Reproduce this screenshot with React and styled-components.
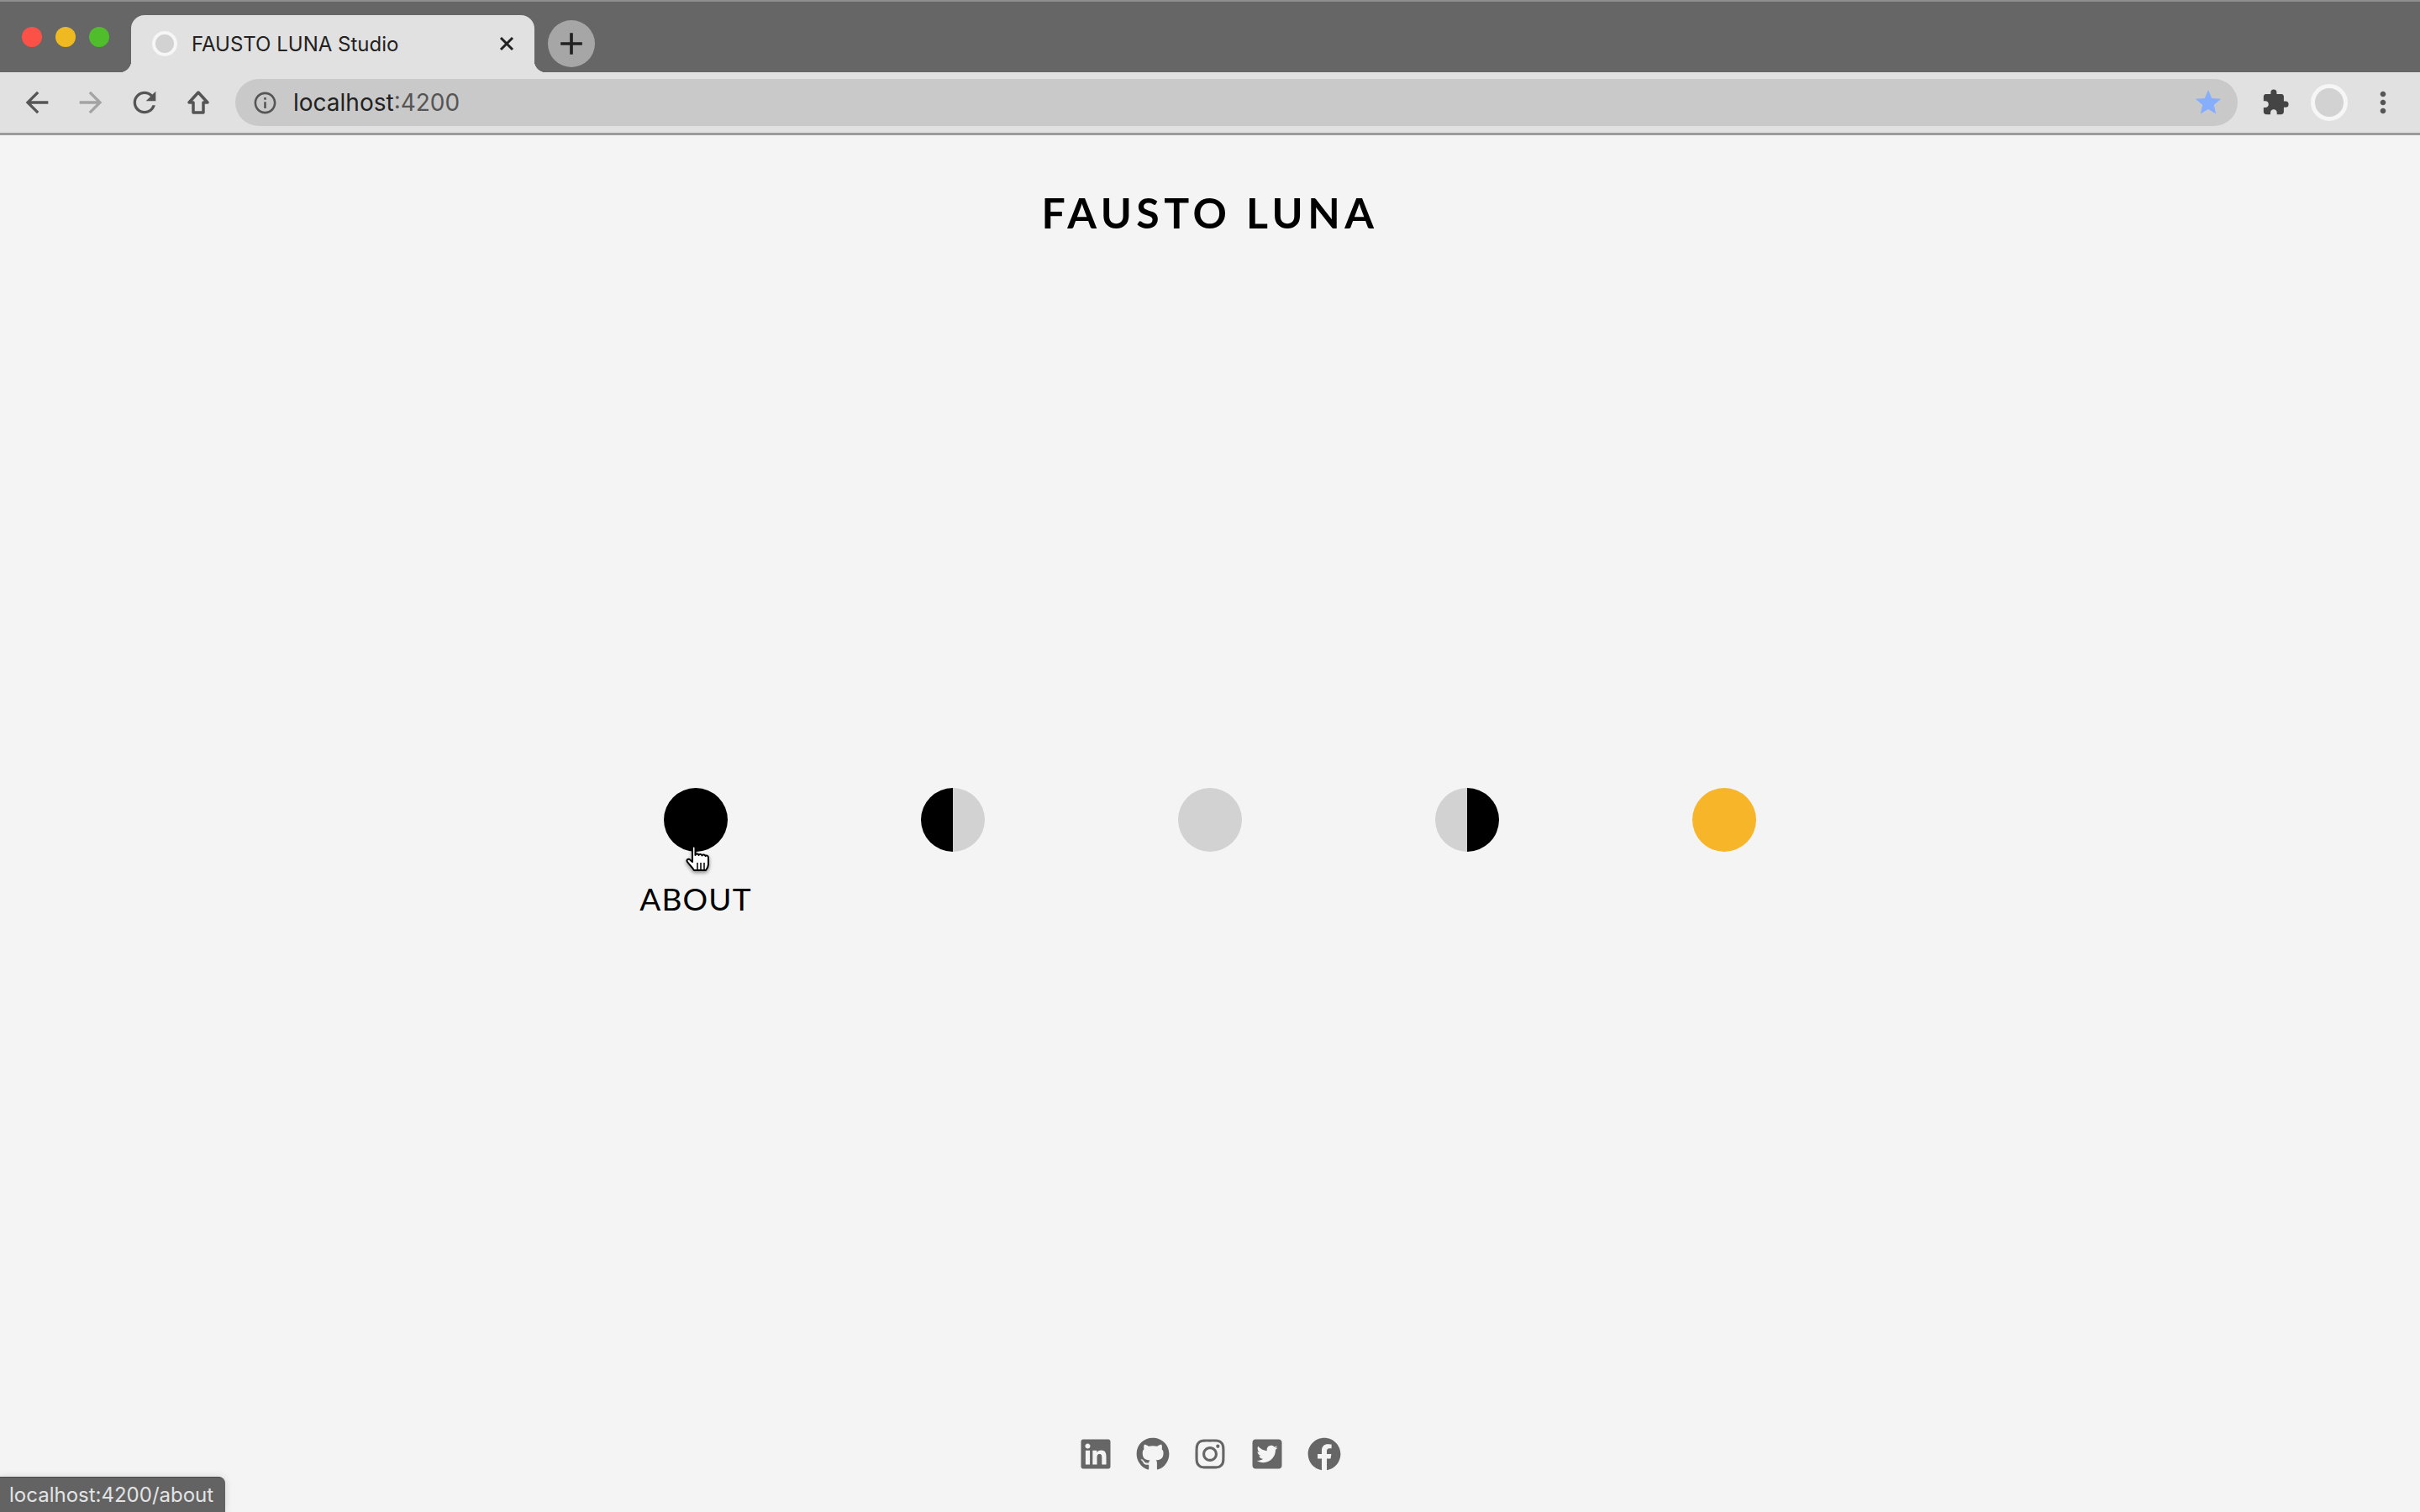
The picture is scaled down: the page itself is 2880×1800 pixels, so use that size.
import React from 'react';
import styled, { createGlobalStyle } from 'styled-components';
import {
  MdArrowBack,
  MdArrowForward,
  MdRefresh,
  MdInfoOutline,
  MdStar,
  MdExtension,
  MdMoreVert,
  MdAdd,
} from 'react-icons/md';
import {
  FaLinkedin,
  FaGithub,
  FaInstagram,
  FaTwitterSquare,
  FaFacebook,
} from 'react-icons/fa';

const GlobalStyle = createGlobalStyle`
  html, body {
    margin: 0;
    padding: 0;
    background: #666;
  }
  #root {
    width: 2880px;
    height: 1800px;
  }
`;

const Window = styled.div`
  position: relative;
  width: 2880px;
  height: 1800px;
  display: flex;
  flex-direction: column;
  overflow: hidden;
  background: #f4f4f4;
  font-family: Inter, Roboto, "Liberation Sans", sans-serif;
`;

const TabStrip = styled.div`
  height: 84px;
  flex: none;
  display: flex;
  align-items: flex-end;
  background: #666;
  border-top: 2px solid #8f8f8f;
  padding-left: 26px;
`;

const Lights = styled.div`
  display: flex;
  gap: 16px;
  align-self: flex-start;
  margin-top: 30px;
  margin-right: 26px;
`;

const Light = styled.span`
  width: 24px;
  height: 24px;
  border-radius: 50%;
  background: ${p => p.$color};
`;

const Tab = styled.div`
  position: relative;
  width: 480px;
  height: 68px;
  box-sizing: border-box;
  padding: 0 23px 0 25px;
  display: flex;
  align-items: center;
  background: #e1e1e1;
  border-radius: 16px 16px 0 0;
  color: #222;
  font-size: 24px;

  &::before,
  &::after {
    content: "";
    position: absolute;
    bottom: 0;
    width: 14px;
    height: 14px;
  }
  &::before {
    left: -14px;
    background: radial-gradient(circle at 0 0, transparent 14px, #e1e1e1 14.5px);
  }
  &::after {
    right: -14px;
    background: radial-gradient(circle at 100% 0, transparent 14px, #e1e1e1 14.5px);
  }
`;

const Favicon = styled.span`
  width: 22px;
  height: 22px;
  flex: none;
  border-radius: 50%;
  background: #d2d2d2;
  border: 4px solid #f6f6f6;
  margin-right: 17px;
`;

const TabTitle = styled.span`
  flex: 1;
  white-space: nowrap;
`;

const NewTab = styled.div`
  width: 56px;
  height: 56px;
  margin: 0 0 6px 16px;
  border-radius: 50%;
  background: #a6a6a6;
  color: #222;
  display: flex;
  align-items: center;
  justify-content: center;
  font-size: 44px;
`;

const Toolbar = styled.div`
  height: 75px;
  flex: none;
  box-sizing: border-box;
  display: flex;
  align-items: center;
  background: #e1e1e1;
  border-bottom: 3px solid #9b9b9b;
`;

const NavButtons = styled.div`
  width: 280px;
  flex: none;
  display: flex;
  gap: 24px;
  padding-left: 24px;
  box-sizing: border-box;
`;

const ToolIcon = styled.span`
  width: 40px;
  height: 40px;
  flex: none;
  display: flex;
  align-items: center;
  justify-content: center;
  color: ${p => (p.$muted ? '#a3a3a3' : p.$dark ? '#444' : '#555')};
  font-size: ${p => p.$size || 40}px;
`;

const AddressBar = styled.div`
  width: 2383px;
  height: 56px;
  flex: none;
  box-sizing: border-box;
  border-radius: 28px;
  background: #c9c9c9;
  display: flex;
  align-items: center;
  padding: 0 17px 0 20px;
  font-size: 28px;
`;

const InfoIcon = styled.span`
  display: flex;
  color: #555;
  font-size: 31px;
  margin-right: 18px;
`;

const Host = styled.span`
  color: #222;
`;

const Port = styled.span`
  color: #555;
  flex: 1;
`;

const Star = styled.span`
  display: flex;
  color: #86aefc;
  font-size: 36px;
`;

const ToolActions = styled.div`
  flex: 1;
  display: flex;
  align-items: center;
  padding-left: 25px;
  gap: 22px;
`;

const Avatar = styled.span`
  width: 44px;
  height: 44px;
  flex: none;
  box-sizing: border-box;
  border-radius: 50%;
  background: #d2d2d2;
  border: 5px solid #f6f6f6;
`;

const Page = styled.main`
  flex: 1;
  display: flex;
  flex-direction: column;
  align-items: center;
  background: #f4f4f4;
  color: #000;
  font-family: Lato, "Open Sans", sans-serif;
`;

const Title = styled.h1`
  margin: 0;
  padding-top: 62px;
  font-size: 50px;
  line-height: 60px;
  font-weight: 700;
  letter-spacing: 5.5px;
  white-space: nowrap;
`;

const Nav = styled.nav`
  display: flex;
  gap: 230px;
  margin-top: 655px;
`;

const NavItem = styled.div`
  position: relative;
  width: 76px;
  height: 76px;
`;

const Dot = styled.div`
  width: 76px;
  height: 76px;
  border-radius: 50%;
  background: ${p => p.$fill};
`;

const Label = styled.span`
  position: absolute;
  top: 110px;
  left: 50%;
  transform: translateX(-50%);
  font-size: 37px;
  line-height: 44px;
  letter-spacing: 1.2px;
  white-space: nowrap;
`;

const Cursor = styled.svg`
  position: absolute;
  left: 25px;
  top: 68px;
  width: 32px;
  height: 34px;
  filter: drop-shadow(0 2px 2px rgba(0, 0, 0, 0.45));
`;

const Social = styled.footer`
  margin-top: auto;
  margin-bottom: 49px;
  display: flex;
  align-items: center;
  gap: 28px;
  color: #666;
  font-size: 40px;
  line-height: 0;
`;

const StatusBubble = styled.div`
  position: absolute;
  left: 0;
  bottom: 0;
  width: 268px;
  height: 42px;
  box-sizing: border-box;
  padding-left: 11px;
  display: flex;
  align-items: center;
  background: #636363;
  border-top: 1px solid #4a4a4a;
  border-top-right-radius: 8px;
  box-shadow: 0 0 10px rgba(0, 0, 0, 0.12);
  color: #e3e3e3;
  font-size: 24px;
  white-space: nowrap;
`;

const half = (a, b) => `linear-gradient(90deg, ${a} 50%, ${b} 50%)`;

const dots = [
  { id: 'about', fill: '#000', label: 'ABOUT', hover: true },
  { id: 'work', fill: half('#000', '#d2d2d2') },
  { id: 'blog', fill: '#d2d2d2' },
  { id: 'lab', fill: half('#d2d2d2', '#000') },
  { id: 'contact', fill: '#f7b52a' },
];

const CloseIcon = () => (
  <svg width="20" height="20" viewBox="0 0 20 20">
    <path d="M3 3l14 14M17 3 3 17" stroke="#222" strokeWidth="3" />
  </svg>
);

// chrome's home button is a plain outlined house, no door
const HomeIcon = () => (
  <svg width="32" height="36" viewBox="0 0 32 36" fill="none">
    <path
      d="M16 6 5 18h5v12h12V18h5z"
      stroke="currentColor"
      strokeWidth="3.5"
      strokeLinejoin="round"
    />
  </svg>
);

const HandCursor = () => (
  <Cursor viewBox="0 0 32 34">
    <path
      d="M9 3c0-2 3.5-2 3.5 0v9c.5-2 3.500-2 4 0 .5-1.500 3.500-1.500 4 .5.500-1.500 3.500-1.500 4 .5 1-1 3.500-.5 3.500 2v8c0 3-1.500 5-3 7H11c-2-3-5-6-8-10-1.500-2 .5-4 2.500-3L9 20z"
      fill="#fff"
      stroke="#000"
      strokeWidth="2"
      strokeLinejoin="round"
    />
    <path d="M15 21v8M19 21v8M23 21v8" stroke="#000" strokeWidth="1.500" />
  </Cursor>
);

export default function App() {
  return (
    <Window>
      <GlobalStyle />
      <TabStrip>
        <Lights>
          <Light $color="#fb5147" />
          <Light $color="#eeb921" />
          <Light $color="#50bd2c" />
        </Lights>
        <Tab>
          <Favicon />
          <TabTitle>FAUSTO LUNA Studio</TabTitle>
          <CloseIcon />
        </Tab>
        <NewTab>
          <MdAdd />
        </NewTab>
      </TabStrip>
      <Toolbar>
        <NavButtons>
          <ToolIcon><MdArrowBack /></ToolIcon>
          <ToolIcon $muted><MdArrowForward /></ToolIcon>
          <ToolIcon><MdRefresh /></ToolIcon>
          <ToolIcon><HomeIcon /></ToolIcon>
        </NavButtons>
        <AddressBar>
          <InfoIcon><MdInfoOutline /></InfoIcon>
          <Host>localhost</Host>
          <Port>:4200</Port>
          <Star><MdStar /></Star>
        </AddressBar>
        <ToolActions>
          <ToolIcon $size={34} $dark><MdExtension /></ToolIcon>
          <Avatar />
          <ToolIcon><MdMoreVert /></ToolIcon>
        </ToolActions>
      </Toolbar>
      <Page>
        <Title>FAUSTO LUNA</Title>
        <Nav>
          {dots.map(d => (
            <NavItem key={d.id}>
              <Dot $fill={d.fill} />
              {d.hover && <HandCursor />}
              {d.label && <Label>{d.label}</Label>}
            </NavItem>
          ))}
        </Nav>
        <Social>
          <FaLinkedin />
          <FaGithub />
          <FaInstagram />
          <FaTwitterSquare />
          <FaFacebook />
        </Social>
      </Page>
      <StatusBubble>localhost:4200/about</StatusBubble>
    </Window>
  );
}
